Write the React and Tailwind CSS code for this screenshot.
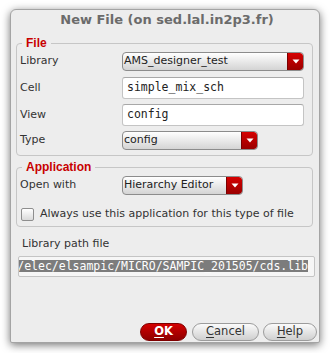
import React from "react";

const sans = "font-['DejaVu_Sans',sans-serif]";

const Arrow = () => (
  <span className="flex w-[16px] shrink-0 items-center justify-center rounded-r-[3px] border-l border-[#7a0000] bg-gradient-to-b from-[#d60000] to-[#9a0000]">
    <svg width="8" height="5" viewBox="0 0 8 5">
      <path d="M0.5 0.5h7L4 4.5z" fill="#ffffff" />
    </svg>
  </span>
);

const Select = ({ value, className }) => (
  <div
    className={
      "flex h-[19px] items-stretch overflow-hidden rounded-[4px] border border-[#8c8c8c] bg-gradient-to-b from-white to-[#d4d4d4] " +
      className
    }
  >
    <span className="flex flex-1 items-center pl-[1px] text-[11px] text-[#222]">{value}</span>
    <Arrow />
  </div>
);

const TextBox = ({ value }) => (
  <div className="flex h-[22px] w-[182px] items-center rounded-[3px] border border-[#c4c4c4] border-t-[#a8a8a8] bg-white pl-[4px] font-['DejaVu_Sans_Mono',monospace] text-[11.5px] text-[#222]">
    {value}
  </div>
);

const Row = ({ label, children, className = "" }) => (
  <div className={"flex items-center " + className}>
    <span className="w-[102px] text-[11px] text-[#333]">{label}</span>
    {children}
  </div>
);

const Group = ({ title, children, className = "" }) => (
  <div
    className={
      "relative ml-[5px] w-[297px] rounded-[4px] border border-[#c6c6c6] pl-[3px] " + className
    }
  >
    <span className="absolute -top-[8px] left-[5px] bg-[#ededed] px-[4px] font-['Liberation_Sans',sans-serif] text-[12px] font-bold leading-[14px] text-[#c80000]">
      {title}
    </span>
    {children}
  </div>
);

const Button = ({ red, first, rest, className }) => (
  <button
    className={
      "flex h-[18px] items-center justify-center rounded-full border text-[11.5px] leading-none " +
      (red
        ? "border-[#7e0000] bg-gradient-to-b from-[#d40000] to-[#8e0000] font-bold text-white "
        : "border-[#9c9c9c] bg-gradient-to-b from-[#fbfbfb] to-[#cfcfcf] text-[#333] ") +
      className
    }
  >
    <span className="underline underline-offset-[2px]">{first}</span>
    {rest}
  </button>
);

export default function App() {
  return (
    <div className={"h-[353px] w-[330px] overflow-hidden bg-white pl-[10px] pt-[9px] " + sans}>
      <div className="flex h-[334px] w-[310px] flex-col rounded-b-[2px] rounded-t-[6px] border border-[#a4a4a4] bg-[#ededed] shadow-[0_2px_8px_rgba(0,0,0,0.55)]">
        {/* title */}
        <div className="flex h-[20px] items-center justify-center pl-[4px] text-[13px] font-bold text-[#6b6b6b]">
          New File (on sed.lal.in2p3.fr)
        </div>

        {/* File */}
        <Group title="File" className="mt-[13px] pb-[5px] pt-[8px]">
          <Row label="Library">
            <Select value="AMS_designer_test" className="w-[182px]" />
          </Row>
          <Row label="Cell" className="mt-[6px]">
            <TextBox value="simple_mix_sch" />
          </Row>
          <Row label="View" className="mt-[5px]">
            <TextBox value="config" />
          </Row>
          <Row label="Type" className="mt-[5px]">
            <Select value="config" className="w-[136px]" />
          </Row>
        </Group>

        {/* Application */}
        <Group title="Application" className="mt-[11px] pb-[3px] pt-[8px]">
          <Row label="Open with">
            <Select value="Hierarchy Editor" className="w-[121px]" />
          </Row>
          <div className="mt-[11px] flex items-center">
            <span className="ml-[1px] h-[13px] w-[13px] rounded-[2px] border border-[#8e8e8e] bg-gradient-to-b from-white to-[#dadada]" />
            <span className="ml-[6px] text-[11px] text-[#333]">
              Always use this application for this type of file
            </span>
          </div>
        </Group>

        {/* Library path */}
        <div className="ml-[11px] mt-[10px] text-[11px] leading-[13px] text-[#333]">Library path file</div>
        <div className="ml-[7px] mt-[6px] flex h-[21px] w-[297px] items-center justify-end overflow-hidden rounded-[2px] border border-[#c4c4c4] bg-[#f6f6f6] pr-[6px]">
          <span className="whitespace-nowrap bg-[#7c7c7c] font-['DejaVu_Sans_Mono',monospace] text-[11.5px] leading-[12px] text-white">
            /elec/elsampic/MICRO/SAMPIC_201505/cds.lib
          </span>
        </div>

        {/* buttons */}
        <div className="mt-auto flex justify-end gap-[4px] pb-[1px] pr-[2px]">
          <Button red first="O" rest="K" className="mr-[1px] w-[47px]" />
          <Button first="C" rest="ancel" className="w-[67px]" />
          <Button first="H" rest="elp" className="w-[54px]" />
        </div>
      </div>
    </div>
  );
}
